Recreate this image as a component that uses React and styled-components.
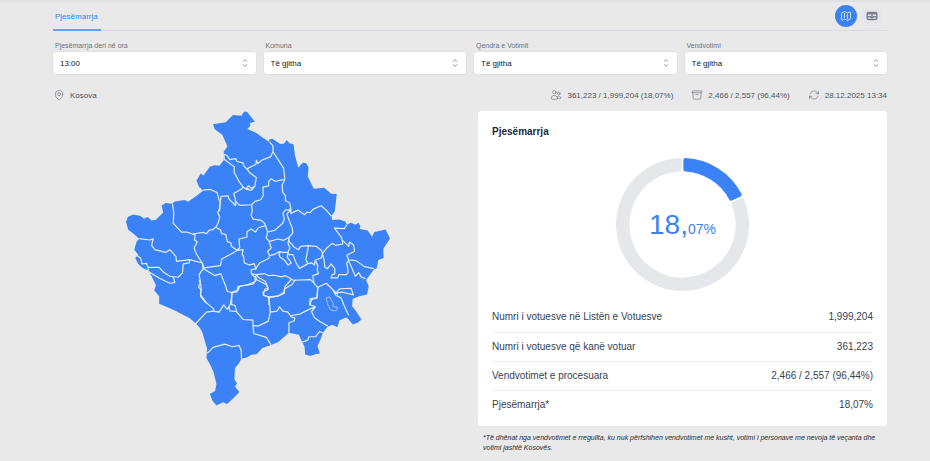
import React, { useState } from "react";
import styled, { createGlobalStyle } from "styled-components";
import { HiTable } from "react-icons/hi";
import {
    HiOutlineMap,
    HiOutlineMapPin,
    HiOutlineUsers,
    HiOutlineArchiveBox,
    HiOutlineArrowPath,
    HiChevronUpDown,
} from "react-icons/hi2";

const GlobalStyle = createGlobalStyle`
* { box-sizing : border-box; }
body {
    margin : 0;
    background-color : #e9e9e9;
    color : #374151;
    font-family : "Liberation Sans", Arial, sans-serif;
}
`

const Page = styled.div`
border-top : 2px solid #e1e1e1;
padding : 0 43px 0 53px;
`

const Header = styled.header`
display : flex;
align-items : stretch;
justify-content : space-between;
height : 29px;
border-bottom : 1px solid #dadbe3;
`

const Tab = styled.button`
margin-bottom : -1px;
padding : 1px 3px 0 2px;
border : 0;
border-bottom : 2px solid #6b9df5;
background : none;
color : #3b82f6;
font : 8px "Liberation Sans", Arial, sans-serif;
cursor : pointer;
`

const ViewButtons = styled.div`
display : flex;
gap : 4px;
padding : 3px 4px 0 0;
`

const ViewButton = styled.button`
display : flex;
align-items : center;
justify-content : center;
width : 22px;
height : 22px;
padding : 0;
border : 0;
border-radius : 50%;
font-size : ${props => props.$active ? "12px" : "14px"};
background-color : ${props => props.$active ? "#3b82f6" : "#e6e7ea"};
color : ${props => props.$active ? "#fff" : "#7d828c"};
cursor : pointer;
`

const Filters = styled.form`
display : grid;
grid-template-columns : repeat(4, 1fr);
gap : 8px;
margin-top : 10px;
`

const Field = styled.label`
display : block;
color : #6b7280;
font-size : 7px;
line-height : 9px;
`

const FieldName = styled.span`
display : block;
padding-left : 2px;
`

const SelectBox = styled.span`
display : grid;
grid-template-columns : 1fr 22px;
align-items : center;
height : 22px;
margin-top : 2px;
border-radius : 3px;
background-color : #fff;
box-shadow : 0 0 2px rgba(0, 0, 0, 0.12);
color : #9ca3af;
font-size : 12px;

svg {
    grid-area : 1 / 2;
    justify-self : center;
    pointer-events : none;
}
`

const Select = styled.select`
grid-area : 1 / 1 / 2 / 3;
width : 100%;
height : 22px;
padding : 0 7px;
border : 0;
background : none;
appearance : none;
color : #111827;
font : 8px "Liberation Sans", Arial, sans-serif;
`

const Summary = styled.div`
display : flex;
justify-content : space-between;
margin-top : 15px;
`

const Stats = styled.div`
display : flex;
gap : 18px;
`

const Stat = styled.div`
display : flex;
align-items : center;
gap : 5px;
height : 12px;
color : #4b5563;
font-size : 8px;

svg {
    font-size : 12px;
    color : #7d828c;
}
`

const Content = styled.main`
display : grid;
grid-template-columns : 1fr 1fr;
gap : 16px;
margin-top : 10px;
`

const MapColumn = styled.section`
display : flex;
justify-content : center;
align-items : flex-start;
`

const MapSvg = styled.svg`
width : 70%;
overflow : visible;
`

const Card = styled.section`
padding : 14px 14px 7px;
border-radius : 4px;
background-color : #fff;
`

const CardTitle = styled.h2`
margin : 0;
font-size : 10px;
line-height : 14px;
color : #1f2937;
`

const DonutBox = styled.div`
display : grid;
place-items : center;
margin : 19px 0 12px;

> * { grid-area : 1 / 1; }
`

const Percent = styled.div`
color : #3b82f6;
font-size : 28px;

small { font-size : 14px; }
`

const Table = styled.table`
width : 100%;
border-collapse : collapse;
font-size : 10px;
line-height : 12px;

th, td {
    height : 29px;
    padding : 0;
    font-weight : normal;
    text-align : left;
}
td { text-align : right; }
tr + tr { border-top : 1px solid #eff0f2; }
`

const Note = styled.p`
margin : 7px 0 0;
padding : 0 5px;
color : #1f2937;
font-size : 7px;
font-style : italic;
line-height : 10px;
`

const filters = [
    { name: "Pjesëmarrja deri në ora", value: "13:00" },
    { name: "Komuna", value: "Të gjitha" },
    { name: "Qendra e Votimit", value: "Të gjitha" },
    { name: "Vendvotimi", value: "Të gjitha" },
]

const rows = [
    ["Numri i votuesve në Listën e Votuesve", "1,999,204"],
    ["Numri i votuesve që kanë votuar", "361,223"],
    ["Vendvotimet e procesuara", "2,466 / 2,557 (96,44%)"],
    ["Pjesëmarrja*", "18,07%"],
]

const country = `M213.3 124.3L226 122.3 233.3 115 241.7 115.7 244.3 111.7 247.3 111.7 255.3 121.7 250 123 250.7 125.7 247.7 129
256.7 133 263.3 137.7 270 142.3 269.3 139.7 272.7 138.7 280.7 144 284.7 143.7 287 140 290 143.3 294 144.3 295.3 155
298.7 167.7 303.3 163 306.7 163.3 309 167.7 308.3 176.7 314.3 189 324.7 188 331.7 194 337.3 194.3 335.3 211.7
332 216.3 332.7 220.3 340 219.7 346 221.7 347.3 225 351.7 223 356 225 359.3 223 361 226.7 360.3 229.3 368.3 230.7
372.7 237 375 232.3 386.3 229.7 390.7 238.7 384 249 384.3 258.3 379 260.3 377.3 269 374.7 269.7 366.7 280.3
369.3 286.7 367.7 295 360 296.7 353.3 299.3 352.7 306.7 356.7 311.7 362 320 358.3 323.3 353.3 325 349.3 320
346.7 318 340 320.7 338 327.7 332.7 325.3 328.3 327.3 323.3 333.3 321 340 318 346.7 320.3 354 316.7 354.7
310.7 356.7 305.7 355 305 347.3 302.7 342.7 299.3 335.3 289.3 333.3 278.3 342.7 270 346 262.7 348.7 257.3 354.7
251.7 355.3 246.7 358.3 241.7 359 239.3 364 235.3 368.7 234.7 380 237.3 384.3 235.3 387.3 239.7 392.7 233.3 399.3
227.3 404.7 223.3 403 216.7 406.3 212.7 401.3 210 394.7 215.3 391.7 216.7 385 214 373.3 210.7 366 206.7 358.7
207.3 349.3 202.7 333.3 200 328.3 196 324 190 318.7 175 311 159.3 304.3 159.3 296.7 154.3 291 156 285.7
151.7 276.7 148.3 271 142.7 268.3 138.3 264.3 135.3 258.3 138.3 255 134.3 250 136.7 241.7 139.3 239 133.3 233.7
128.3 230 126 222.3 128 217 133.3 214.7 140.7 216.3 144 219 147.7 217.3 151.7 220.7 156 220 163.3 212.7 161.7 206
165.7 203.3 172.3 204 175 201.7 185 200.3 188.3 202 196.7 196 203.3 191 199 186.7 196.7 180.7 201 173.7
203.7 175.7 210 167 215 165.3 219.7 166 224 160.3 224 151.7 227.7 146.7 222.7 135 215 129.3Z`

// municipality borders, grouped by part of the country
const borders = [
    {
        area: "north", x: 190, y: 105,
        d: `M240 112L250 122 250 140 243 156 218 165 205 176 200 166 199 178 172 192 163 184 160 174 142 170 138 161 120 164 112 152 102 148 104 164 134 186 133 202 150 233 160 246 157 252 132 266 136 278 138 303 118 283 115 273 94 275 88 320
        M172 192L180 204 200 218 196 243 186 256 170 254 160 246M170 252L176 243 186 250 192 246M174 250L180 256
        M250 140L266 165 282 190 286 224 272 226 258 230 244 222 238 228 237 243 220 247 221 272 213 285 196 290 186 300 150 302 138 290
        M286 224L278 240 279 262 287 272 288 288 300 294 304 312M40 256L62 254 82 263 88 286 94 288`,
    },
    {
        area: "centre", x: 190, y: 180,
        d: `M92 60L90 88 84 98 90 112 85 130 79 142 68 150 58 152 50 162 40 158 8 163
        M186 76L188 95 184 106 190 118 215 122 226 132 234 157 255 152 280 130 284 118 280 100 288 90 300 92 302 85
        M226 138L205 145 198 157 184 148 172 156 172 172 148 178 150 204 142 212 125 200 124 190 113 186 108 164 96 162 92 150 80 144
        M234 157L230 176 240 185 265 178 282 182 300 172
        M142 212L160 210 158 225 162 232 164 250 180 256 194 252 198 268 210 250 238 236 240 228 234 215 245 205 238 185
        M38 250L42 265 92 258 96 238 130 220 142 212`,
    },
    {
        area: "basin", x: 225, y: 220,
        d: `M193 65L200 72 208 82 222 90 228 80 252 78 275 80 290 92 295 102 290 115 272 122 270 136 262 130 250 132 240 138 225 147 215 130 205 105 192 105 190 98
        M252 78L248 100 244 120 250 132
        M135 108L150 104 165 96 176 98 190 98 196 85 190 70 193 60
        M168 96L163 104 166 112 180 122 190 136 200 130 188 112 190 98
        M95 148L80 150 80 162 95 165 120 162 130 168 150 167 170 172 182 168 200 178 206 182 258 180 268 190
        M95 165L90 180M95 165L102 174 122 185 130 205 120 210 116 225 132 234 160 230 178 218 182 200 200 180M132 234L133 256
        M272 122L280 138 278 150 282 162 265 168 268 190 280 205 278 235 262 240 255 258`,
    },
    {
        area: "west", x: 120, y: 195,
        d: `M158 28L162 55 160 85 185 112 200 112 218 118 226 120 224 135 232 142 223 160 230 178 247 205 210 195 170 200 168 185 150 165 138 173 105 165 95 152 100 132 90 136 58 132
        M247 205L250 222 238 240 242 262 236 278 244 285 242 305 258 325
        M250 222L285 243 303 237 318 275 322 290 336 294 352 292 354 276 385 270 405 262 410 250 396 240
        M210 195L208 205 190 208 188 235 175 248 150 245 130 232 118 218 84 218 80 206 66 208 62 190 50 182
        M85 218L84 230 120 252 150 266 165 264 160 248M336 294L336 328`,
    },
    {
        area: "east", x: 250, y: 195,
        d: `M124 42L124 56 145 46 165 60 172 52 182 54 190 44 215 33 230 46 246 64
        M124 45L112 58 118 75 128 100 130 115 118 128 118 140
        M218 178L232 160 248 146 258 152 280 148 276 128 255 100 285 102 292 90
        M280 138L298 155 300 142 312 150 316 170 292 182 298 196 320 198 345 216 374 222
        M298 196L292 205 296 232 292 240 268 240 265 250 245 250 248 240 256 238 256 222 245 208 234 222 226 218 224 196 218 178
        M298 200L305 215 318 245 328 234 336 248 348 252
        M205 278L230 266 250 285 265 300`,
    },
    {
        area: "south", x: 190, y: 280,
        d: `M28 0L34 20 32 45 50 70 72 88 70 95 50 98 18 132M70 95L88 98 102 76 112 90 122 74 128 38M126 38L145 32 150 20 190 14 200 0 230 15 236 30 220 38 222 48 238 52 242 98 236 125 205 140 190 138 190 122 160 120 140 96 120 94 118 82
        M122 74L136 78 140 94M190 138L192 162 230 174 244 196
        M242 98L262 95 270 82 280 95 295 98 305 112 316 115 314 124 298 130 298 160
        M305 108L330 104 362 88 378 82 360 75 362 58 382 54 385 22
        M238 52L262 50 284 42 285 28 308 14 318 0
        M378 82L366 96 375 115 390 125 415 140
        M430 32L440 48 455 55 465 80 478 108M438 42L450 28 485 26 492 46 460 38 440 40
        M338 188L355 182 358 172 378 172 390 156 400 160
        M52 222L70 204 105 194 128 202 148 198 155 215 155 237`,
    },
]

const KosovoMap = () => (
    <MapSvg viewBox="114 111 287 296" role="img" aria-label="Kosova">
        <path d={country} fill="#3b82f6" />
        {borders.map(b => (
            <path
                key={b.area}
                d={b.d}
                transform={`translate(${b.x} ${b.y}) scale(0.33333)`}
                fill="none"
                stroke="#e4ecf8"
                strokeWidth="3.6"
                strokeLinejoin="round"
            />
        ))}
        <path
            d="M326.7 298.3L330 297.3 334 304 333.3 306.7 338.3 308 336.7 311.3 331.3 310.7 328.3 305Z"
            fill="none"
            stroke="#b5cffa"
            strokeWidth="0.8"
        />
    </MapSvg>
)

// ring slice from one angle to another, the stroke rounds its corners
const slice = (from, to) => {
    const point = (r, deg) => {
        const a = deg * Math.PI / 180
        return `${r * Math.sin(a)} ${-r * Math.cos(a)}`
    }
    const large = to - from > 180 ? 1 : 0
    const out = 2.5
    const inn = 3
    return `M${point(64.5, from + out)}A64.5 64.5 0 ${large} 1 ${point(64.5, to - out)}
    L${point(55, to - inn)}A55 55 0 ${large} 0 ${point(55, from + inn)}Z`
}

const Donut = ({ value }) => {
    const end = value * 3.6
    return (
        <svg width="133" height="133" viewBox="-66.5 -66.5 133 133" strokeWidth="4" strokeLinejoin="round">
            <path d={slice(end, 360)} fill="#e5e7eb" stroke="#e5e7eb" />
            <path d={slice(0, end)} fill="#3b82f6" stroke="#3b82f6" />
        </svg>
    )
}

export default function App() {

    const [view, setView] = useState("map");

    return (
        <Page>
            <GlobalStyle />
            <Header>
                <Tab type="button">Pjesëmarrja</Tab>
                <ViewButtons>
                    <ViewButton type="button" aria-label="Harta" $active={view === "map"} onClick={() => setView("map")}>
                        <HiOutlineMap />
                    </ViewButton>
                    <ViewButton type="button" aria-label="Tabela" $active={view === "table"} onClick={() => setView("table")}>
                        <HiTable />
                    </ViewButton>
                </ViewButtons>
            </Header>
            <Filters>
                {filters.map(filter => (
                    <Field key={filter.name}>
                        <FieldName>{filter.name}</FieldName>
                        <SelectBox>
                            <Select>
                                <option>{filter.value}</option>
                            </Select>
                            <HiChevronUpDown />
                        </SelectBox>
                    </Field>
                ))}
            </Filters>
            <Summary>
                <Stat><HiOutlineMapPin /> Kosova</Stat>
                <Stats>
                    <Stat><HiOutlineUsers /> 361,223 / 1,999,204 (18,07%)</Stat>
                    <Stat><HiOutlineArchiveBox /> 2,466 / 2,557 (96,44%)</Stat>
                    <Stat><HiOutlineArrowPath /> 28.12.2025 13:34</Stat>
                </Stats>
            </Summary>
            <Content>
                <MapColumn>
                    <KosovoMap />
                </MapColumn>
                <div>
                    <Card>
                        <CardTitle>Pjesëmarrja</CardTitle>
                        <DonutBox>
                            <Donut value={18.07} />
                            <Percent>18,<small>07%</small></Percent>
                        </DonutBox>
                        <Table>
                            <tbody>
                                {rows.map(([name, value]) => (
                                    <tr key={name}>
                                        <th scope="row">{name}</th>
                                        <td>{value}</td>
                                    </tr>
                                ))}
                            </tbody>
                        </Table>
                    </Card>
                    <Note>
                        *Të dhënat nga vendvotimet e rregullta, ku nuk përfshihen vendvotimet me kusht, votimi i personave me nevoja të veçanta dhe votimi jashtë Kosovës.
                    </Note>
                </div>
            </Content>
        </Page>
    )
}
